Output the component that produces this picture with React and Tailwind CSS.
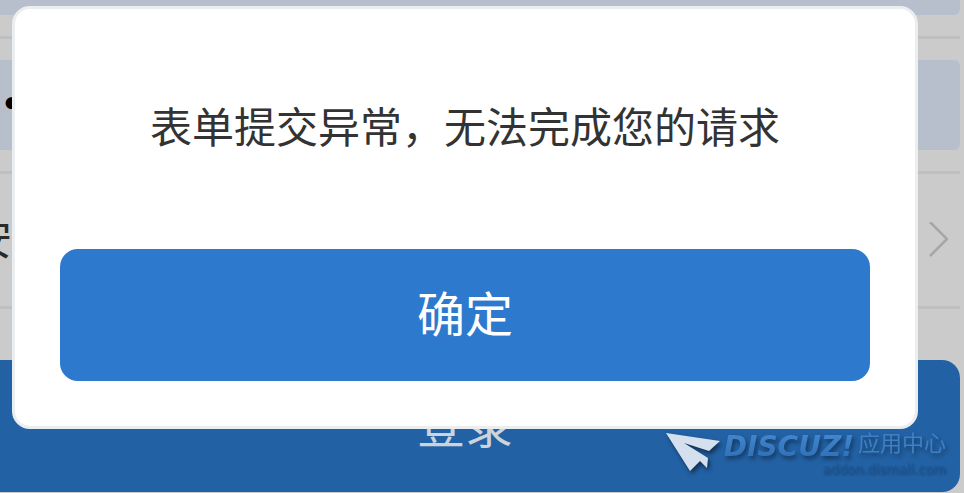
function Divider() {
  return <hr className="h-[3px] border-0 bg-[#bfbfbf]" />;
}

function LoginForm() {
  return (
    <form className="mr-1 flex flex-col" onSubmit={(e) => e.preventDefault()}>
      <input
        type="text"
        aria-label="用户名"
        className="h-[15px] w-full rounded-br-md bg-[#b8bfcc] outline-none"
      />
      <div className="h-[21px]" />
      <Divider />
      <div className="py-[21px]">
        <input
          type="text"
          aria-label="密码"
          defaultValue="●"
          className="h-[90px] w-full rounded-r-md bg-[#b8bfcc] px-[5px] pb-[6px] text-[13px] text-black outline-none"
        />
      </div>
      <Divider />
      <button type="button" className="flex h-[132px] items-center justify-between pr-3 text-left">
        <span className="-ml-[30px] pb-2 text-[42px] text-[#2a2a2a]">安</span>
        <svg className="h-9 w-5" viewBox="0 0 20 36" fill="none" stroke="#a6a6a6" strokeWidth="2.5" aria-hidden="true">
          <path d="M2 0 L19 17 L2 34" />
        </svg>
      </button>
      <Divider />
      <button
        type="submit"
        className="mt-[51px] h-[132px] rounded-r-[18px] bg-[#2261a4] pr-[30px] pb-2 text-center text-[48px] text-[#ccd3dc]"
      >
        登录
      </button>
    </form>
  );
}

function AlertDialog() {
  return (
    <div
      role="alertdialog"
      aria-labelledby="alert-message"
      className="absolute top-[6px] right-[46px] left-3 rounded-[18px] border-[3px] border-[#ebeef1] bg-white px-[45px] pt-[83px] pb-[45px]"
    >
      <p id="alert-message" className="mb-[91px] text-center text-[42px] leading-[66px] whitespace-nowrap text-[#333]">
        表单提交异常，无法完成您的请求
      </p>
      <button type="button" className="h-[132px] w-full rounded-[18px] bg-[#2c79cd] pb-2 text-[48px] text-white">
        确定
      </button>
    </div>
  );
}

function Watermark() {
  return (
    <div className="pointer-events-none absolute right-[18px] bottom-3 flex items-start">
      <svg className="h-12 w-[58px] drop-shadow-[2px_3px_2px_rgba(0,0,0,0.5)]" viewBox="0 0 58 48" aria-hidden="true">
        <path d="M0 4 L54 12 L43 22 L18 14 L42 29 L41 39 L34 32 L24 42 Z" fill="#d5e0ee" />
      </svg>
      <div className="flex flex-col items-end">
        <div className="flex h-7 items-center drop-shadow-[2px_3px_2px_rgba(0,0,0,0.4)]">
          <span className="bg-gradient-to-b from-[#4a8fd5] to-[#2d6db5] bg-clip-text pt-2 pr-1 font-['DejaVu_Sans'] text-[28px] leading-7 font-bold text-transparent italic">
            DISCUZ!
          </span>
          <span className="pb-1 text-[22px] leading-6 text-[#3f7fc3]">应用中心</span>
        </div>
        <span className="font-['DejaVu_Sans'] text-[13px] leading-6 text-[#1d5795] drop-shadow-[1px_2px_1px_rgba(0,0,0,0.35)]">
          addon.dismall.com
        </span>
      </div>
    </div>
  );
}

export default function App() {
  return (
    <main className="relative overflow-hidden bg-[#cbcbcb] pb-px font-['Noto_Sans_CJK_SC',sans-serif]">
      <LoginForm />
      <AlertDialog />
      <Watermark />
    </main>
  );
}
